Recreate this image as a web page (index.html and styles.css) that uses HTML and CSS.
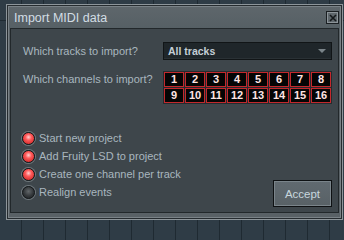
FILE: index.html
```html
<!DOCTYPE html>
<html>
<head>
<meta charset="utf-8">
<link rel="stylesheet" href="styles.css">
</head>
<body>
<div class="window">
  <div class="titlebar">
    <span class="title">Import MIDI data</span>
    <span class="close"><svg width="8" height="8" viewBox="0 0 8 8"><path d="M1 1L7 7M7 1L1 7" stroke="#15191b" stroke-width="1.6"/></svg></span>
  </div>
  <div class="panel">
    <div class="row row-tracks">
      <span class="label">Which tracks to import?</span>
      <div class="dropdown"><span>All tracks</span><span class="arrow"></span></div>
    </div>
    <div class="row row-channels">
      <span class="label label-ch">Which channels to import?</span>
      <div class="grid">
        <span class="cell">1</span><span class="cell">2</span><span class="cell">3</span><span class="cell">4</span>
        <span class="cell">5</span><span class="cell">6</span><span class="cell">7</span><span class="cell">8</span>
        <span class="cell">9</span><span class="cell">10</span><span class="cell">11</span><span class="cell">12</span>
        <span class="cell">13</span><span class="cell">14</span><span class="cell">15</span><span class="cell">16</span>
      </div>
    </div>
    <div class="bottom">
      <ul class="options">
        <li class="opt"><span class="radio on"></span>Start new project</li>
        <li class="opt"><span class="radio on"></span>Add Fruity LSD to project</li>
        <li class="opt"><span class="radio on"></span>Create one channel per track</li>
        <li class="opt"><span class="radio"></span>Realign events</li>
      </ul>
      <button class="accept">Accept</button>
    </div>
  </div>
</div>
</body>
</html>
```

FILE: styles.css
```css
html, body {
  margin: 0;
  padding: 0;
}
body {
  width: 344px;
  height: 224px;
  overflow: hidden;
  background-color: #2f3c46;
  background-image:
    repeating-linear-gradient(90deg, transparent 0 21px, #1f2a32 21px 22px),
    linear-gradient(180deg, transparent 0 20px, #1f2a32 20px 21px, transparent 21px);
  font-family: "Liberation Sans", Arial, sans-serif;
  padding-top: 4px;
  padding-left: 6px;
  box-sizing: border-box;
}
.window {
  width: 337px;
  height: 216px;
  box-sizing: border-box;
  border: 1px solid #8d959a;
  box-shadow: inset 0 0 0 1px #262c30, inset 0 0 0 2px #7a8287;
  padding: 2px;
  background: #596166;
  display: flex;
  flex-direction: column;
}
.titlebar {
  height: 21px;
  display: flex;
  align-items: center;
  justify-content: space-between;
  padding-left: 5px;
  padding-right: 1px;
  background: linear-gradient(#5e666b, #566065);
}
.title {
  color: #d2dde4;
  font-size: 12.5px;
  line-height: 14px;
  margin-top: 1px;
}
.close {
  width: 13px;
  height: 13px;
  box-sizing: border-box;
  border: 1px solid #1a1f22;
  box-shadow: inset 0 0 0 1px #8c9499;
  background: #5f676c;
  display: flex;
  align-items: center;
  justify-content: center;
}
.close svg { display: block; }
.panel {
  flex: 1;
  margin: 0 1px 4px 1px;
  border: 1px solid #22282b;
  background: #3e464b;
  padding: 13px 6px 3px 12px;
  display: flex;
  flex-direction: column;
}
.row {
  display: flex;
  justify-content: space-between;
}
.row-tracks {
  align-items: center;
  height: 18px;
}
.row-channels {
  margin-top: 11px;
  align-items: flex-start;
}
.label {
  color: #a9b6bf;
  font-size: 11px;
  line-height: 15px;
}
.label-ch {
  margin-top: 1px;
}
.dropdown {
  width: 169px;
  height: 18px;
  box-sizing: border-box;
  border: 1px solid #111517;
  box-shadow: inset 0 -1px 0 #2a3135;
  background: #1f262a;
  display: flex;
  align-items: center;
  justify-content: space-between;
  padding: 0 4px 0 4px;
  color: #c4ced6;
  font-size: 10.5px;
  font-weight: bold;
}
.arrow {
  width: 0;
  height: 0;
  border-left: 4px solid transparent;
  border-right: 4px solid transparent;
  border-top: 4px solid #7a8489;
  margin-right: 1px;
}
.grid {
  width: 169px;
  box-sizing: border-box;
  padding: 1px;
  background: #252b2f;
  display: grid;
  grid-template-columns: repeat(8, 20px);
  grid-auto-rows: 15px;
  gap: 1px;
}
.cell {
  box-sizing: border-box;
  border: 1px solid #c3282c;
  background: #050505;
  color: #ffe4e4;
  font-size: 11px;
  font-weight: bold;
  line-height: 13px;
  text-align: center;
}
.bottom {
  margin-top: 25px;
  display: flex;
  justify-content: space-between;
  align-items: flex-end;
}
.options {
  list-style: none;
  margin: 0 0 6px -1px;
  padding: 0;
}
.opt {
  height: 18px;
  display: flex;
  align-items: center;
  color: #a9b6bf;
  font-size: 11px;
}
.radio {
  width: 13px;
  height: 13px;
  box-sizing: border-box;
  border-radius: 50%;
  border: 1.5px solid #15191b;
  box-shadow: 0 0 0 1px #6f777c;
  background: radial-gradient(circle at 50% 40%, #62676a 0, #33373a 55%, #1f2224 100%);
  margin-right: 4px;
  flex: none;
}
.radio.on {
  background: radial-gradient(circle at 50% 38%, #ffd0d0 0, #ff5a5a 35%, #c01a1a 100%);
}
.accept {
  width: 59px;
  height: 27px;
  box-sizing: border-box;
  border: 1px solid #0e1113;
  box-shadow: inset 0 0 0 1px #7a848a;
  background: linear-gradient(#616a70, #586166);
  color: #c8d6de;
  font-family: "Liberation Sans", Arial, sans-serif;
  font-size: 11.5px;
  padding: 0;
  margin: 0;
}
```
